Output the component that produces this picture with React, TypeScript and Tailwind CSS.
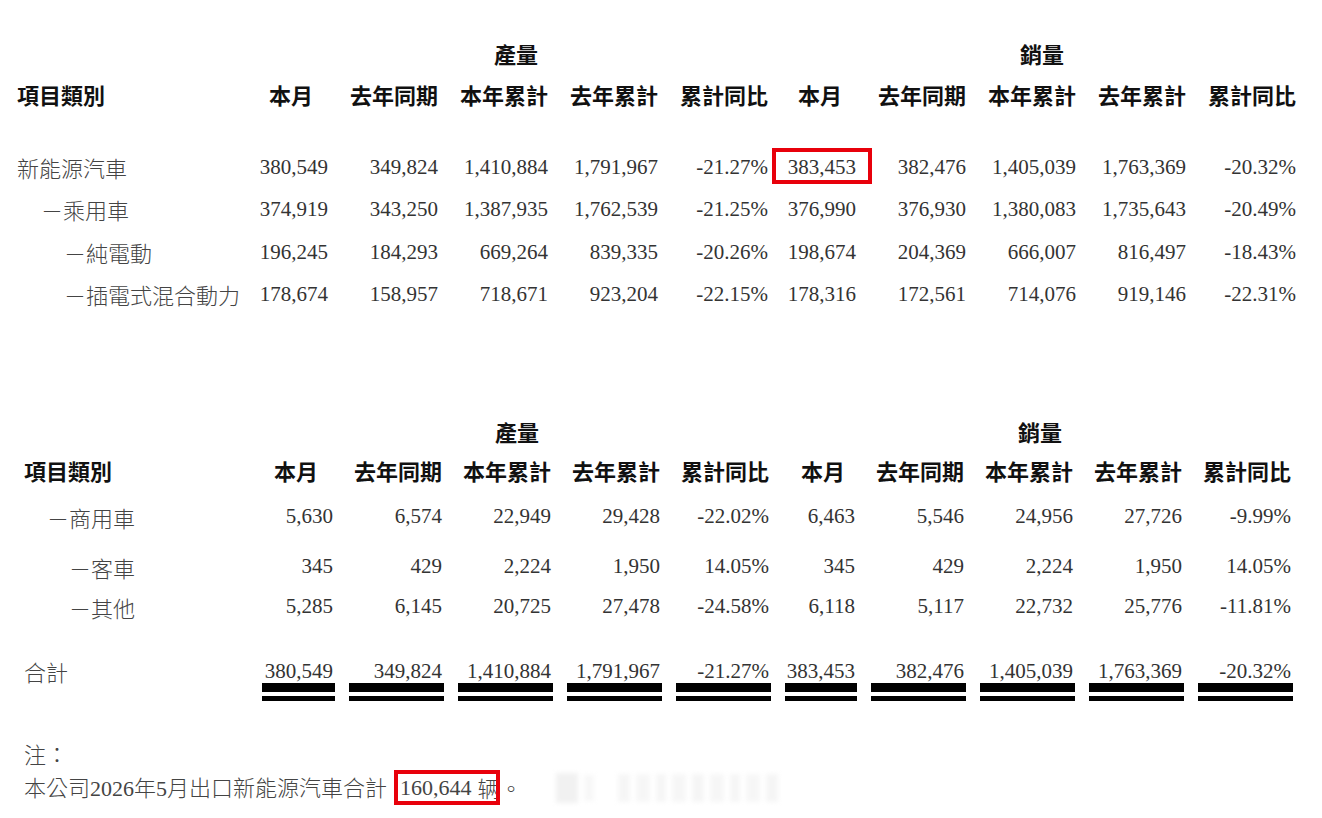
import React from 'react';

const cjk = "font-['Noto_Sans_CJK_TC','Noto_Sans_CJK_SC',sans-serif]";
const num = "font-['Liberation_Serif','Noto_Sans_CJK_TC',serif] text-[21px] text-[#333] text-right";
const head = `${cjk} text-[22px] font-bold text-[#111] text-right`;
const label = `${cjk} text-[22px] font-light text-[#444] whitespace-nowrap`;

const headers = ['本月', '去年同期', '本年累計', '去年累計', '累計同比', '本月', '去年同期', '本年累計', '去年累計', '累計同比'];

const topRows = [
  { name: '新能源汽車', indent: 'pl-0', v: ['380,549', '349,824', '1,410,884', '1,791,967', '-21.27%', '383,453', '382,476', '1,405,039', '1,763,369', '-20.32%'] },
  { name: '－乘用車', indent: 'pl-[24px]', v: ['374,919', '343,250', '1,387,935', '1,762,539', '-21.25%', '376,990', '376,930', '1,380,083', '1,735,643', '-20.49%'] },
  { name: '－純電動', indent: 'pl-[47px]', v: ['196,245', '184,293', '669,264', '839,335', '-20.26%', '198,674', '204,369', '666,007', '816,497', '-18.43%'] },
  { name: '－插電式混合動力', indent: 'pl-[47px]', v: ['178,674', '158,957', '718,671', '923,204', '-22.15%', '178,316', '172,561', '714,076', '919,146', '-22.31%'] },
];

const bottomRows = [
  { name: '－商用車', indent: 'pl-[23px]', gap: '', v: ['5,630', '6,574', '22,949', '29,428', '-22.02%', '6,463', '5,546', '24,956', '27,726', '-9.99%'] },
  { name: '－客車', indent: 'pl-[45px]', gap: 'mt-[10px]', v: ['345', '429', '2,224', '1,950', '14.05%', '345', '429', '2,224', '1,950', '14.05%'] },
  { name: '－其他', indent: 'pl-[45px]', gap: '', v: ['5,285', '6,145', '20,725', '27,478', '-24.58%', '6,118', '5,117', '22,732', '25,776', '-11.81%'] },
];

const total = ['380,549', '349,824', '1,410,884', '1,791,967', '-21.27%', '383,453', '382,476', '1,405,039', '1,763,369', '-20.32%'];

const topGrid = 'grid grid-cols-[201px_repeat(5,110px)_88px_repeat(4,110px)] pl-[17px]';
const bottomGrid = 'grid grid-cols-[224px_73px_repeat(4,95px)_72px_repeat(4,95px)] gap-x-[14px] pl-[24px]';

function TopTable() {
  return (
    <div className="pt-[32px]">
      <div className={`${topGrid} h-[42px] items-center`}>
        <div />
        <div className={`col-span-5 pl-[276px] ${cjk} text-[22px] font-bold text-[#111]`}>產量</div>
        <div className={`col-span-5 pl-[252px] ${cjk} text-[22px] font-bold text-[#111]`}>銷量</div>
      </div>
      <div className={`${topGrid} h-[41px] items-center`}>
        <div className={`${cjk} text-[22px] font-bold text-[#111]`}>項目類別</div>
        {headers.map((h, i) => (
          <div key={i} className={`${head} ${i === 0 ? 'pr-[15px]' : i === 5 ? 'pr-[14px]' : ''}`}>{h}</div>
        ))}
      </div>
      <div className="h-[31px]" />
      {topRows.map((r) => (
        <div key={r.name} className={`${topGrid} h-[42.5px] items-center`}>
          <div className={`${label} ${r.indent}`}>{r.name}</div>
          {r.v.map((x, i) =>
            i === 5 && r.name === '新能源汽車' ? (
              <div key={i} className={`${num} relative self-stretch flex items-center justify-end`}>
                {x}
                <span className="absolute left-[4px] right-[-16px] top-[2px] bottom-[5px] border-[4px] border-[#e8000b]" />
              </div>
            ) : (
              <div key={i} className={num}>{x}</div>
            )
          )}
        </div>
      ))}
    </div>
  );
}

function BottomTable() {
  return (
    <div className="mt-[95px]">
      <div className={`${bottomGrid} h-[40px] items-center`}>
        <div />
        <div className={`col-span-5 pl-[233px] ${cjk} text-[22px] font-bold text-[#111]`}>產量</div>
        <div className={`col-span-5 pl-[233px] ${cjk} text-[22px] font-bold text-[#111]`}>銷量</div>
      </div>
      <div className={`${bottomGrid} h-[38px] items-center`}>
        <div className={`${cjk} text-[22px] font-bold text-[#111]`}>項目類別</div>
        {headers.map((h, i) => (
          <div key={i} className={`${head} ${i === 0 ? 'pr-[17px]' : i === 5 ? 'pr-[12px]' : 'pr-[2px]'}`}>{h}</div>
        ))}
      </div>
      <div className="h-[8px]" />
      {bottomRows.map((r) => (
        <div key={r.name} className={`${bottomGrid} h-[40px] items-center ${r.gap}`}>
          <div className={`${label} ${r.indent}`}>{r.name}</div>
          {r.v.map((x, i) => (
            <div key={i} className={`${num} pr-[2px]`}>{x}</div>
          ))}
        </div>
      ))}
      <div className={`${bottomGrid} h-[30px] items-center mt-[28px]`}>
        <div className={label}>合計</div>
        {total.map((x, i) => (
          <div key={i} className={`${num} pr-[2px]`}>{x}</div>
        ))}
      </div>
      <div className={`${bottomGrid} mt-[-2px]`}>
        <div />
        {total.map((_, i) => (
          <div key={i} className="flex flex-col">
            <div className="h-[9px] bg-black" />
            <div className="mt-[4px] h-[5px] bg-black" />
          </div>
        ))}
      </div>
    </div>
  );
}

function Note() {
  return (
    <div className={`mt-[35px] pl-[24px] ${cjk} text-[22px] font-light text-[#444]`}>
      <div className="h-[34px] flex items-center">注：</div>
      <div className="h-[35px] flex items-center whitespace-nowrap">
        <span>
          本公司<span className="font-['Liberation_Serif',serif] font-normal">2026</span>年<span className="font-['Liberation_Serif',serif] font-normal">5</span>月出口新能源汽車合計
        </span>
        <span className="ml-[7px] inline-flex items-center h-full w-[106px] overflow-hidden border-[4px] border-[#e8000b] pl-[2px]">
          <span className="font-['Liberation_Serif',serif] font-normal">160,644</span>
          <span className="ml-[6px]">辆</span>
        </span>
        <span>。</span>
        <div className="ml-[34px] flex items-center gap-[6px] h-full blur-[2px] opacity-50">
          <div className="w-[22px] h-[30px] bg-[#e4e4e4]" />
          <div className="w-[10px] h-[26px] bg-[#f0f0f0]" />
          <div className="ml-[18px] w-[12px] h-[28px] bg-[#ededed]" />
          <div className="w-[14px] h-[28px] bg-[#efefef]" />
          <div className="w-[10px] h-[28px] bg-[#ededed]" />
          <div className="w-[14px] h-[28px] bg-[#eeeeee]" />
          <div className="w-[12px] h-[28px] bg-[#ececec]" />
          <div className="w-[14px] h-[28px] bg-[#eeeeee]" />
          <div className="w-[10px] h-[28px] bg-[#ededed]" />
          <div className="w-[14px] h-[28px] bg-[#efefef]" />
          <div className="w-[12px] h-[28px] bg-[#ececec]" />
        </div>
      </div>
    </div>
  );
}

export default function App() {
  return (
    <div className="w-[1322px] h-[818px] bg-white overflow-hidden">
      <TopTable />
      <BottomTable />
      <Note />
    </div>
  );
}
